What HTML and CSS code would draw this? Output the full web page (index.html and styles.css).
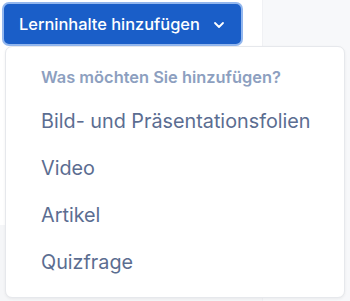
FILE: index.html
```html
<!DOCTYPE html>
<html lang="de">
<head>
    <meta charset="UTF-8">
    <meta name="viewport" content="width=device-width, initial-scale=1.0">
    <title>Lerninhalte</title>
    <link rel="stylesheet" href="styles.css">
</head>
<body>
    <div class="page">
        <div class="main">
            <div class="toolbar">
                <button class="add-btn" type="button">
                    Lerninhalte hinzufügen
                    <svg class="chevron" width="12" height="8" viewBox="0 0 12 8">
                        <path d="M2 2l4 4 4-4" fill="none" stroke="#fff" stroke-width="1.8" stroke-linecap="round" stroke-linejoin="round"/>
                    </svg>
                </button>
            </div>
            <div class="lower"></div>
        </div>
        <div class="side"></div>

        <!-- Dropdown menu -->
        <div class="menu">
            <div class="menu-title">Was möchten Sie hinzufügen?</div>
            <a class="menu-item" href="#">Bild- und Präsentationsfolien</a>
            <a class="menu-item" href="#">Video</a>
            <a class="menu-item" href="#">Artikel</a>
            <a class="menu-item" href="#">Quizfrage</a>
        </div>
    </div>
</body>
</html>
```

FILE: styles.css
```css
body {
    margin: 0;
    font-family: Inter, "Noto Sans", sans-serif;
    background: #fff;
}
.page {
    position: relative;
    display: grid;
    grid-template-columns: 262px 1fr;
    height: 301px;
}
.main {
    display: flex;
    flex-direction: column;
}
.toolbar {
    height: 225px;
    background: #fff;
}
.lower {
    flex: 1;
    background: #f5f6f8;
}
.side {
    background: #f7f8fa;
    border-left: 1px solid #f0f1f4;
}
.add-btn {
    margin: 2px 0 0 2px;
    height: 44px;
    padding: 0 16px 0 15px;
    display: flex;
    align-items: center;
    gap: 13px;
    background: #1a5ec8;
    color: #fff;
    border: 2px solid #93b7ee;
    border-radius: 7px;
    font-family: inherit;
    font-size: 16.4px;
    font-weight: 500;
    cursor: pointer;
}
.chevron {
    margin-top: 1px;
}
.menu {
    position: absolute;
    top: 46px;
    left: 5px;
    width: 340px;
    height: 252px;
    background: #fff;
    border: 1px solid #e6e8ec;
    border-radius: 7px;
    box-shadow: 0 1px 3px rgba(0, 0, 0, 0.06);
    padding: 17px 0 0 35px;
    box-sizing: border-box;
}
.menu-title {
    color: #8d9fc0;
    font-size: 16.4px;
    font-weight: 600;
    height: 34px;
    line-height: 26px;
}
.menu-item {
    display: block;
    color: #5b6d91;
    font-size: 19.8px;
    line-height: 47px;
    text-decoration: none;
}
```
